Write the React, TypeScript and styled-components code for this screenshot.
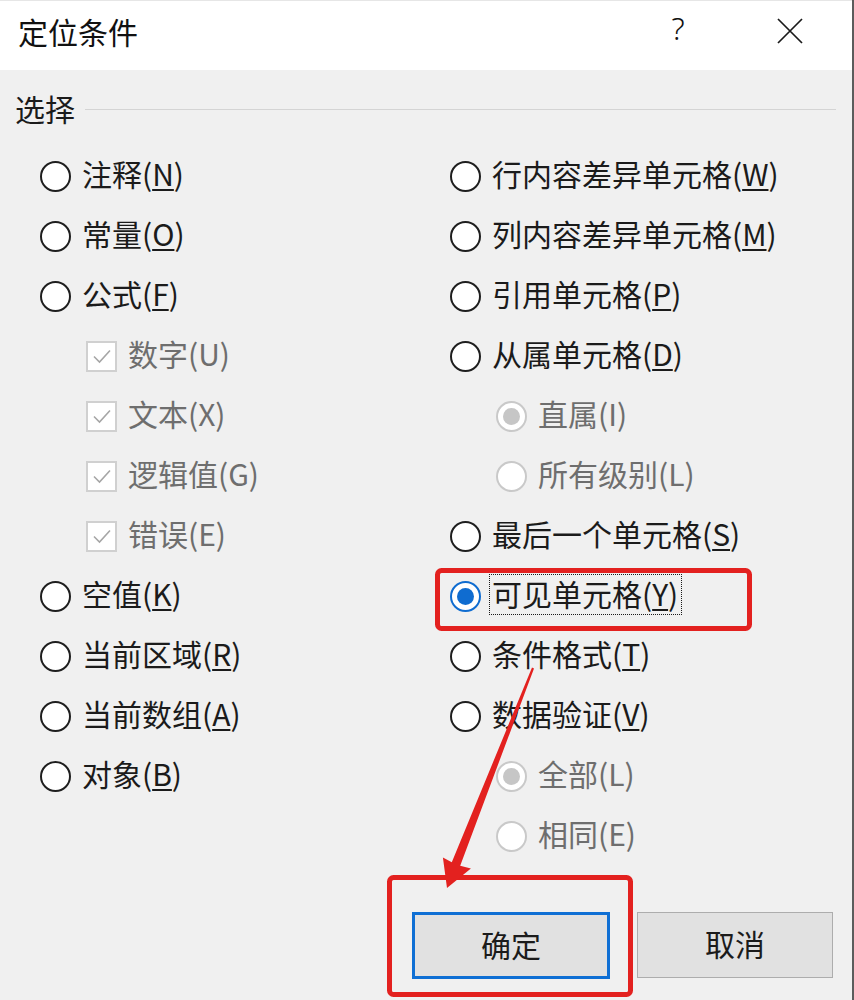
import React from "react";
import styled, { createGlobalStyle } from "styled-components";

const Global = createGlobalStyle`
  html, body { margin: 0; padding: 0; background: #f0f0f0; }
  body { font-family: "Noto Sans CJK SC", "Noto Sans", sans-serif; }
  * { box-sizing: border-box; }
`;

const Dialog = styled.div`
  position: relative;
  width: 854px;
  height: 1000px;
  border-right: 2px solid #5c5c5c;
  background: #f0f0f0;
  display: flex;
  flex-direction: column;
  overflow: hidden;
`;

const TitleBar = styled.div`
  flex: none;
  height: 70px;
  background: #ffffff;
  border-top: 1px solid #e6e6e6;
  display: flex;
  align-items: center;
  padding: 0 32px 10px 18px;
`;

const Title = styled.div`
  flex: 1;
  font-size: 30px;
  line-height: 1;
  color: #111;
`;

const TitleActions = styled.div`
  display: flex;
  align-items: center;
  gap: 52px;
`;

const HelpButton = styled.div`
  width: 60px;
  text-align: center;
  font-family: "Noto Sans", sans-serif;
  font-size: 31px;
  font-weight: 300;
  line-height: 1;
  color: #111;
  margin-top: -4px;
`;

const CloseButton = styled.div`
  width: 60px;
  display: flex;
  justify-content: center;
  align-items: center;
`;

const Body = styled.div`
  flex: 1;
  display: flex;
  flex-direction: column;
  padding: 0 16px 0 15px;
`;

const GroupHeader = styled.div`
  margin-top: 18px;
  height: 40px;
  display: flex;
  align-items: center;
  gap: 10px;
`;

const GroupLabel = styled.span`
  font-size: 30px;
  line-height: 1;
  color: #1b1b1b;
`;

const GroupLine = styled.div`
  flex: 1;
  height: 1px;
  background: #d4d4d4;
  margin-top: 3px;
`;

const Columns = styled.div`
  margin-top: 19px;
  margin-left: 25px;
  display: grid;
  grid-template-columns: 410px 1fr;
`;

const Column = styled.div`
  display: flex;
  flex-direction: column;
`;

const OptionRow = styled.div<{ $indent: number }>`
  height: 60px;
  display: flex;
  align-items: center;
  padding-left: ${(p) => p.$indent}px;
  gap: 8px;
`;

const RadioCircle = styled.span<{ $checked?: boolean; $disabled?: boolean }>`
  flex: none;
  width: 31px;
  height: 31px;
  margin-top: -2px;
  border-radius: 50%;
  background: #ffffff;
  border: 2px solid
    ${(p) => (p.$disabled ? "#c9c9c9" : p.$checked ? "#0f6cd0" : "#1e1e1e")};
  display: flex;
  align-items: center;
  justify-content: center;
  &::after {
    content: "";
    display: ${(p) => (p.$checked ? "block" : "none")};
    width: 17px;
    height: 17px;
    border-radius: 50%;
    background: ${(p) => (p.$disabled ? "#c6c6c6" : "#0f6cd0")};
  }
`;

const CheckSquare = styled.span`
  flex: none;
  width: 31px;
  height: 31px;
  margin-top: -2px;
  background: #ffffff;
  border: 2px solid #d0d0d0;
  display: flex;
  align-items: center;
  justify-content: center;
`;

const Label = styled.span<{ $disabled?: boolean; $focused?: boolean }>`
  font-size: 30px;
  line-height: 1;
  white-space: nowrap;
  color: ${(p) => (p.$disabled ? "#6e6e6e" : "#1b1b1b")};
  padding: 3px 3px 6px 2px;
  margin-top: -6px;
  border: 1px dotted ${(p) => (p.$focused ? "#1a1a1a" : "transparent")};
`;

const Key = styled.span<{ $underline: boolean }>`
  text-decoration: ${(p) => (p.$underline ? "underline" : "none")};
  text-decoration-thickness: 2px;
  text-underline-offset: 3px;
`;

const ButtonRow = styled.div`
  margin-top: 45px;
  display: flex;
  justify-content: flex-end;
  gap: 27px;
  padding-right: 3px;
`;

const Button = styled.div<{ $primary?: boolean }>`
  width: ${(p) => (p.$primary ? 198 : 196)}px;
  height: ${(p) => (p.$primary ? 67 : 66)}px;
  background: #e1e1e1;
  border: ${(p) => (p.$primary ? "3px solid #0f6fd4" : "1.5px solid #adadad")};
  display: flex;
  align-items: center;
  justify-content: center;
  font-size: 30px;
  line-height: 1;
  padding-bottom: 4px;
  color: #1b1b1b;
`;

const Overlay = styled.svg`
  position: absolute;
  left: 0;
  top: 0;
  pointer-events: none;
`;

type Opt = {
  kind: "radio" | "check";
  label: string;
  key: string;
  indent?: number;
  disabled?: boolean;
  checked?: boolean;
  focused?: boolean;
};

const left: Opt[] = [
  { kind: "radio", label: "注释", key: "N" },
  { kind: "radio", label: "常量", key: "O" },
  { kind: "radio", label: "公式", key: "F" },
  { kind: "check", label: "数字", key: "U", indent: 46, disabled: true, checked: true },
  { kind: "check", label: "文本", key: "X", indent: 46, disabled: true, checked: true },
  { kind: "check", label: "逻辑值", key: "G", indent: 46, disabled: true, checked: true },
  { kind: "check", label: "错误", key: "E", indent: 46, disabled: true, checked: true },
  { kind: "radio", label: "空值", key: "K" },
  { kind: "radio", label: "当前区域", key: "R" },
  { kind: "radio", label: "当前数组", key: "A" },
  { kind: "radio", label: "对象", key: "B" },
];

const right: Opt[] = [
  { kind: "radio", label: "行内容差异单元格", key: "W" },
  { kind: "radio", label: "列内容差异单元格", key: "M" },
  { kind: "radio", label: "引用单元格", key: "P" },
  { kind: "radio", label: "从属单元格", key: "D" },
  { kind: "radio", label: "直属", key: "I", indent: 46, disabled: true, checked: true },
  { kind: "radio", label: "所有级别", key: "L", indent: 46, disabled: true },
  { kind: "radio", label: "最后一个单元格", key: "S" },
  { kind: "radio", label: "可见单元格", key: "Y", checked: true, focused: true },
  { kind: "radio", label: "条件格式", key: "T" },
  { kind: "radio", label: "数据验证", key: "V" },
  { kind: "radio", label: "全部", key: "L", indent: 46, disabled: true, checked: true },
  { kind: "radio", label: "相同", key: "E", indent: 46, disabled: true },
];

const CheckMark = () => (
  <svg width="22" height="22" viewBox="0 0 22 22">
    <path d="M3 11.5 L8.5 17 L19 5.5" fill="none" stroke="#a6a6a6" strokeWidth="1.6" />
  </svg>
);

const Option = ({ o }: { o: Opt }) => (
  <OptionRow $indent={o.indent ?? 0}>
    {o.kind === "radio" ? (
      <RadioCircle $checked={o.checked} $disabled={o.disabled} />
    ) : (
      <CheckSquare>{o.checked && <CheckMark />}</CheckSquare>
    )}
    <Label $disabled={o.disabled} $focused={o.focused}>
      {o.label}(<Key $underline={!o.disabled}>{o.key}</Key>)
    </Label>
  </OptionRow>
);

export default function App() {
  return (
    <>
      <Global />
      <Dialog>
        <TitleBar>
          <Title>定位条件</Title>
          <TitleActions>
            <HelpButton>?</HelpButton>
            <CloseButton>
              <svg width="28" height="28" viewBox="0 0 28 28">
                <path d="M2 2 L26 26 M26 2 L2 26" stroke="#1a1a1a" strokeWidth="1.7" fill="none" />
              </svg>
            </CloseButton>
          </TitleActions>
        </TitleBar>
        <Body>
          <GroupHeader>
            <GroupLabel>选择</GroupLabel>
            <GroupLine />
          </GroupHeader>
          <Columns>
            <Column>
              {left.map((o, i) => (
                <Option key={i} o={o} />
              ))}
            </Column>
            <Column>
              {right.map((o, i) => (
                <Option key={i} o={o} />
              ))}
            </Column>
          </Columns>
          <ButtonRow>
            <Button $primary>确定</Button>
            <Button>取消</Button>
          </ButtonRow>
        </Body>
        <Overlay width="854" height="1000" viewBox="0 0 854 1000">
          <rect x="437.5" y="570.5" width="312" height="58" rx="4" fill="none" stroke="#e3211f" strokeWidth="5" />
          <rect x="389.5" y="877.5" width="241" height="117" rx="4" fill="none" stroke="#e3211f" strokeWidth="5" />
          <polygon
            points="534,668.4 532,667.6 451.8,862.3 442.9,857.4 447,888 470.9,868.4 460.2,865.7"
            fill="#e3211f"
          />
        </Overlay>
      </Dialog>
    </>
  );
}
